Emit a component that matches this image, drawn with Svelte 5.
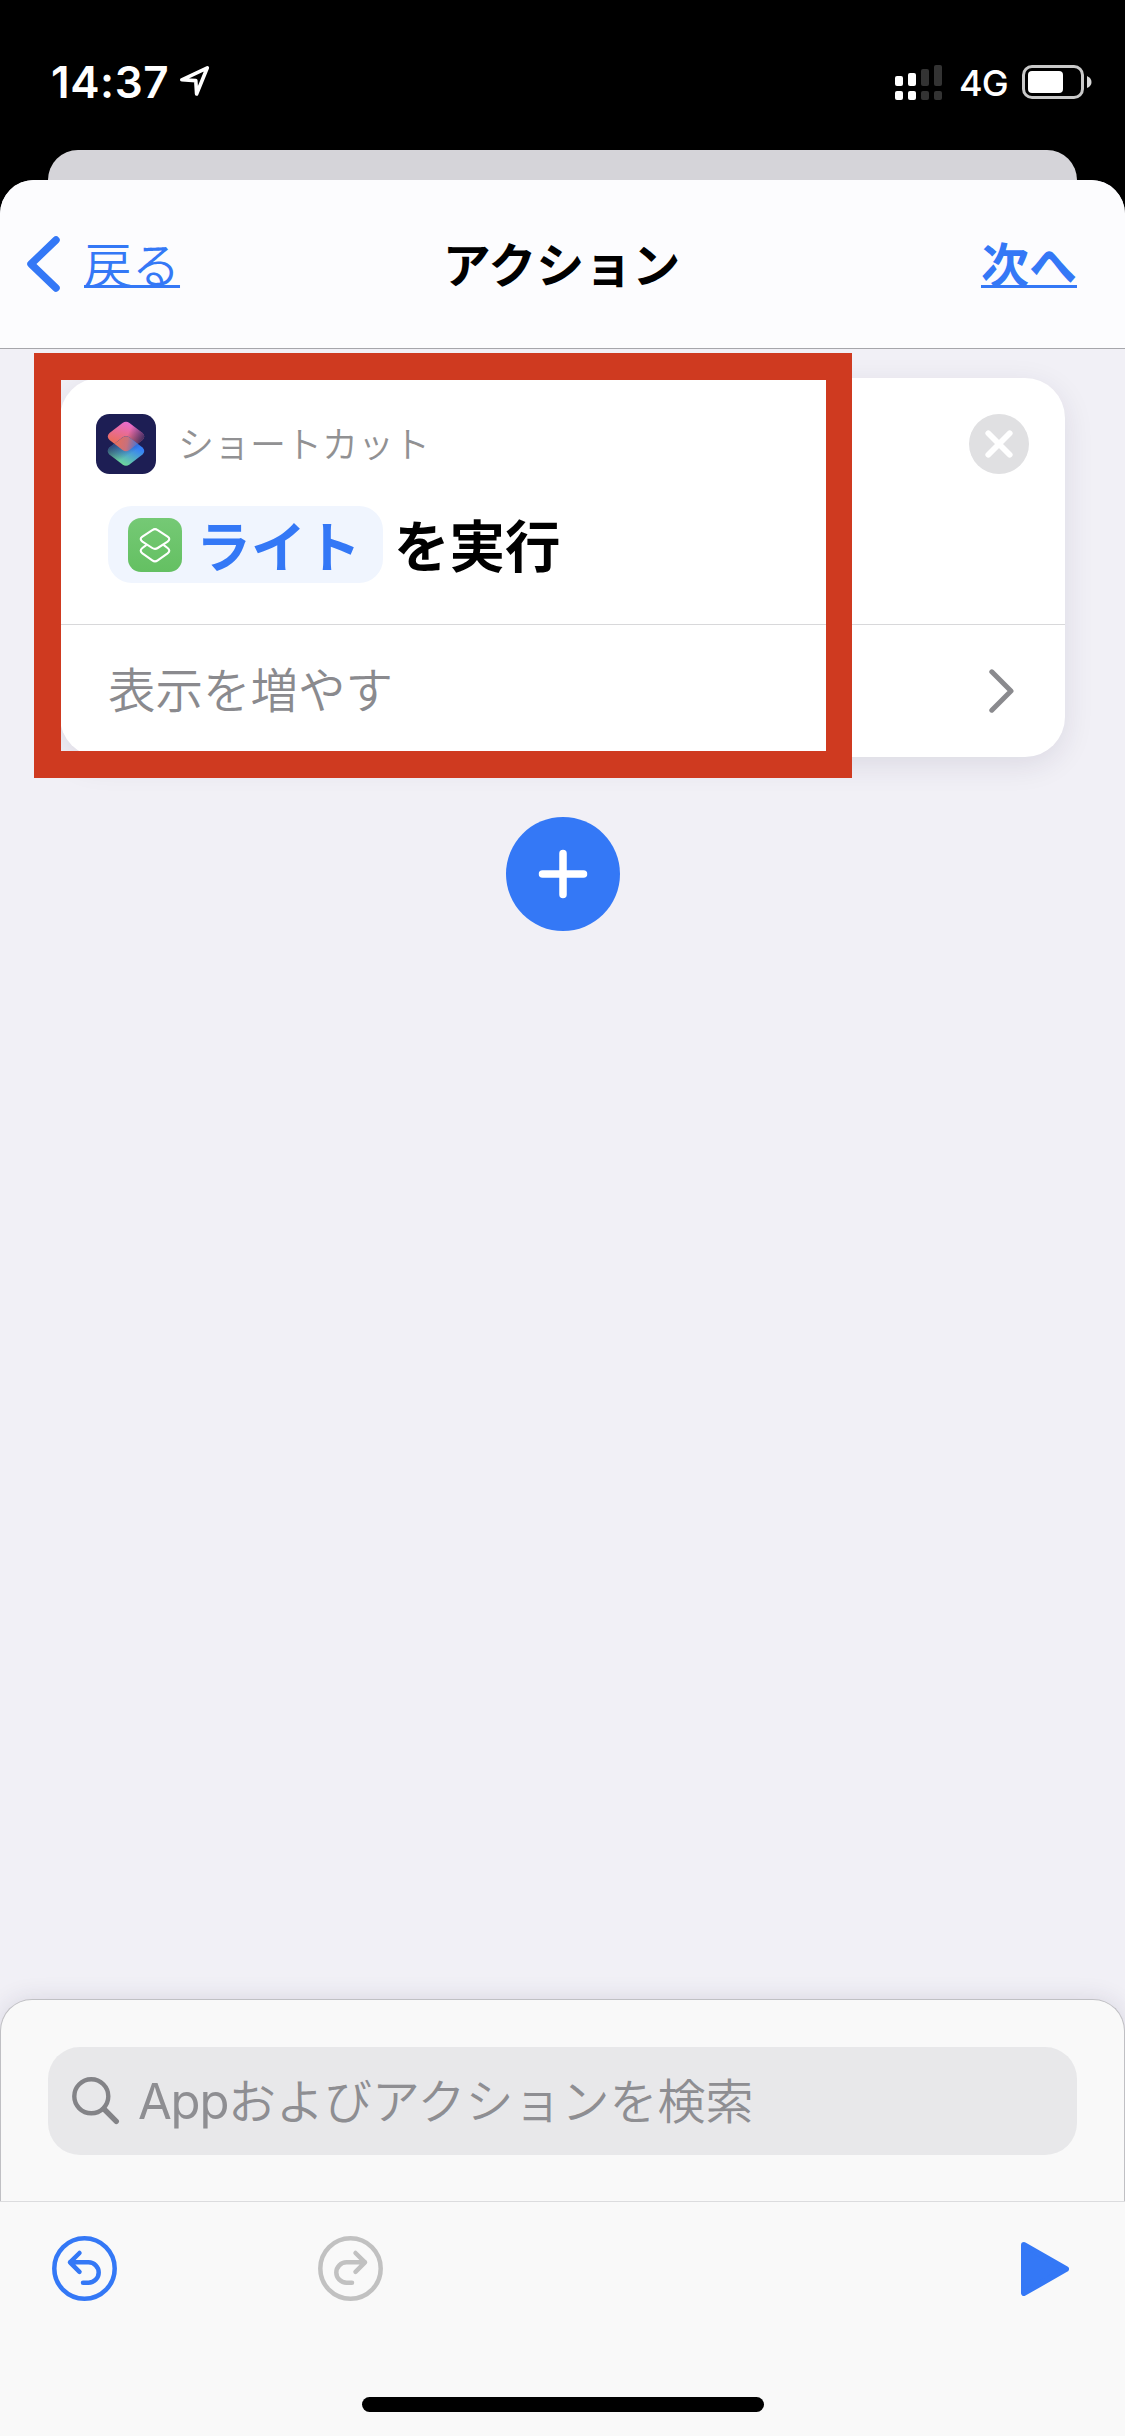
<script>
  const signal = [
    { height: 10, on: true },
    { height: 13, on: true },
    { height: 17, on: false },
    { height: 21, on: false }
  ];

  const diamond = "M26.5 9 Q30 6.4 33.5 9 L46.5 19 Q50 22.5 46.5 26 L33.5 36 Q30 38.6 26.5 36 L13.5 26 Q10 22.5 13.5 19 Z";
</script>

<div class="screen">
  <div class="status">
    <span class="time">14:37</span>
    <svg class="location" width="32" height="32" viewBox="0 0 32 32">
      <path d="M2.8 14.8 L28.3 2.8 L17.6 29 L16.8 15.6 Z" />
    </svg>
    <div class="signal">
      {#each signal as bar}
        <div class="bar" class:on={bar.on}>
          <i style="height: {bar.height}px"></i>
          <i class="dot"></i>
        </div>
      {/each}
    </div>
    <span class="network">4G</span>
    <svg class="battery" width="70" height="34" viewBox="0 0 70 34">
      <rect x="1.5" y="1.5" width="59" height="31" rx="8.5" fill="none" stroke="#c9c9c9" stroke-width="3" />
      <rect x="6" y="6" width="35" height="22" rx="4" fill="#fff" />
      <path d="M65 11 Q69.5 13 69.5 17 Q69.5 21 65 23 Z" fill="#d8d8d8" />
    </svg>
  </div>

  <div class="back-sheet"></div>

  <main class="sheet">
    <header>
      <a class="back" href="#back">
        <svg width="34" height="58" viewBox="0 0 34 58">
          <path d="M30 5 L5 29 L30 53" />
        </svg>
        <span>戻る</span>
      </a>
      <h1>アクション</h1>
      <a class="next" href="#next">次へ</a>
    </header>

    <section class="canvas">
      <div class="card">
        <div class="card-top">
          <div class="app-row">
            <svg width="60" height="60" viewBox="0 0 60 60">
              <defs>
                <linearGradient id="warm" x1="0.6" y1="0" x2="0.3" y2="0.8">
                  <stop offset="0" stop-color="#e76bd3" />
                  <stop offset="1" stop-color="#ea6d53" />
                </linearGradient>
                <linearGradient id="warmShade" x1="0.5" y1="0.4" x2="1" y2="0.6">
                  <stop offset="0.1" stop-color="#1d1e54" stop-opacity="0" />
                  <stop offset="1" stop-color="#1d1e54" stop-opacity="0.85" />
                </linearGradient>
                <linearGradient id="cool" x1="0.8" y1="0.3" x2="0.4" y2="1">
                  <stop offset="0.1" stop-color="#3580f7" />
                  <stop offset="1" stop-color="#72dc94" />
                </linearGradient>
                <linearGradient id="coolShade" x1="0.1" y1="0.2" x2="0.5" y2="0.7">
                  <stop offset="0" stop-color="#1d1e54" stop-opacity="0.8" />
                  <stop offset="1" stop-color="#1d1e54" stop-opacity="0" />
                </linearGradient>
                <linearGradient id="overlap" x1="0.2" y1="0.2" x2="0.85" y2="0.3">
                  <stop offset="0" stop-color="#e86e5a" />
                  <stop offset="0.5" stop-color="#c8707c" />
                  <stop offset="1" stop-color="#3f74d8" />
                </linearGradient>
                <clipPath id="upper"><path d={diamond} /></clipPath>
              </defs>
              <rect width="60" height="60" rx="13.5" fill="#1d1e54" />
              <path d={diamond} fill="url(#warm)" />
              <path d={diamond} fill="url(#warmShade)" />
              <g transform="translate(0 14.5)">
                <path d={diamond} fill="url(#cool)" />
                <path d={diamond} fill="url(#coolShade)" />
              </g>
              <g clip-path="url(#upper)">
                <path d={diamond} transform="translate(0 14.5)" fill="url(#overlap)" />
              </g>
            </svg>
            <span class="app-name">ショートカット</span>
            <svg class="remove" width="60" height="60" viewBox="0 0 60 60">
              <circle cx="30" cy="30" r="30" fill="#e0e0e2" />
              <path d="M19.3 19.3 L40.7 40.7 M40.7 19.3 L19.3 40.7" stroke="#fff" stroke-width="5.8" stroke-linecap="round" />
            </svg>
          </div>
          <div class="action">
            <span class="token">
              <svg width="54" height="54" viewBox="0 0 54 54">
                <defs>
                  <linearGradient id="green" x1="0" y1="0" x2="0" y2="1">
                    <stop offset="0" stop-color="#75c975" />
                    <stop offset="1" stop-color="#64c062" />
                  </linearGradient>
                </defs>
                <rect width="54" height="54" rx="13" fill="url(#green)" />
                <g fill="none" stroke="#fff" stroke-width="2.1" stroke-linejoin="round">
                  <path d="M24.3 12.2 Q27 10 29.7 12.2 L39.6 18.6 Q43 21 39.6 23.6 L29.7 30 Q27 31.8 24.3 30 L14.4 23.6 Q11 21 14.4 18.6 Z" />
                  <path d="M18.5 26.8 L14.4 30 Q11 32.8 14.4 35.4 L24.3 42.4 Q27 44.4 29.7 42.4 L39.6 35.4 Q43 32.8 39.6 30 L35.5 26.8" />
                </g>
              </svg>
              <span class="label">ライト</span>
            </span>
            <span class="run">を実行</span>
          </div>
        </div>
        <div class="more">
          <span>表示を増やす</span>
          <svg width="26" height="44" viewBox="0 0 26 44">
            <path d="M2.8 2.8 L22 22 L2.8 41.2" />
          </svg>
        </div>
      </div>

      <button class="add" aria-label="追加">
        <svg width="50" height="50" viewBox="0 0 50 50">
          <path d="M25 4.5 V45.5 M4.5 25 H45.5" />
        </svg>
      </button>
    </section>

    <section class="drawer">
      <div class="search">
        <svg width="48" height="48" viewBox="0 0 48 48">
          <circle cx="19.3" cy="19.3" r="17" />
          <path d="M32 32 L44.3 44.3" stroke-width="5.4" />
        </svg>
        <span><b>App</b>およびアクションを検索</span>
      </div>
    </section>

    <footer>
      <div class="tools">
        <svg class="undo" width="65" height="65" viewBox="0 0 65 65">
          <circle cx="32.5" cy="32.5" r="30.2" />
          <path d="M27.5 17 L18 26.3 L27.5 35.8 M18 26.3 H36.5 A10.2 10.2 0 0 1 36.5 46.7 H31" />
        </svg>
        <svg class="redo" width="65" height="65" viewBox="0 0 65 65">
          <circle cx="32.5" cy="32.5" r="30.2" />
          <path d="M37.5 17 L47 26.3 L37.5 35.8 M47 26.3 H28.5 A10.2 10.2 0 0 0 28.5 46.7 H34" />
        </svg>
        <svg class="play" width="48" height="54" viewBox="0 0 48 54">
          <path d="M3 3 L45 27 L3 51 Z" />
        </svg>
      </div>
      <div class="home"></div>
    </footer>
  </main>

  <div class="highlight"></div>
</div>

<style>
  :global(body) {
    margin: 0;
    background: #000;
  }

  .screen {
    position: relative;
    width: 1125px;
    height: 2436px;
    overflow: hidden;
    display: flex;
    flex-direction: column;
    background: #000;
    font-family: Inter, "Noto Sans CJK JP", sans-serif;
  }

  svg {
    display: block;
    flex: none;
  }

  .status {
    height: 150px;
    box-sizing: border-box;
    padding: 65px 33px 0 51px;
    display: flex;
    align-items: flex-start;
    color: #fff;
  }

  .time {
    width: 128px;
    font-size: 44px;
    line-height: 34px;
    font-weight: 600;
    letter-spacing: 0.6px;
  }

  .location {
    fill: none;
    stroke: #fff;
    stroke-width: 3.6;
    stroke-linejoin: round;
  }

  .signal {
    display: flex;
    gap: 5px;
    height: 35px;
    margin-left: auto;
  }

  .bar {
    display: flex;
    flex-direction: column;
    justify-content: flex-end;
    gap: 5px;
  }

  .bar i {
    width: 8px;
    background: #333;
    border-radius: 2px;
  }

  .bar .dot {
    height: 9px;
  }

  .bar.on i {
    background: #fff;
  }

  .network {
    width: 63px;
    margin-left: 17px;
    font-size: 36px;
    line-height: 37px;
    font-weight: 450;
    letter-spacing: -1px;
  }

  .back-sheet {
    height: 30px;
    margin: 0 48px;
    background: #d5d4d9;
    border-radius: 30px 30px 0 0;
  }

  .sheet {
    flex: 1;
    display: flex;
    flex-direction: column;
    background: #f1f0f6;
    border-radius: 34px 34px 0 0;
    overflow: hidden;
  }

  header {
    height: 168px;
    display: grid;
    grid-template-columns: 1fr auto 1fr;
    align-items: center;
    padding: 0 48px 0 26px;
    background: #fcfcfe;
    border-bottom: 1px solid #a6a6ab;
    font-size: 48px;
    line-height: 70px;
  }

  header a {
    color: #3478f6;
    text-decoration: none;
  }

  .back {
    display: flex;
    align-items: center;
    gap: 24px;
  }

  .back svg {
    fill: none;
    stroke: #3478f6;
    stroke-width: 7.5;
    stroke-linecap: round;
    stroke-linejoin: round;
  }

  .back span,
  .next {
    padding-top: 3px;
    text-decoration: underline;
    text-decoration-thickness: 3px;
    text-underline-offset: 2px;
    text-decoration-skip-ink: none;
  }

  .back span {
    font-weight: 350;
  }

  h1 {
    margin: 0 0 0 20px;
    padding-top: 3px;
    font-size: 48px;
    font-weight: 700;
  }

  .next {
    justify-self: end;
    font-weight: 600;
  }

  .canvas {
    flex: 1;
    display: flex;
    flex-direction: column;
    align-items: center;
    padding: 29px 60px 0;
  }

  .card {
    width: 1005px;
    height: 379px;
    background: #fff;
    border-radius: 40px;
    box-shadow: 0 8px 30px rgba(40, 30, 70, 0.1);
  }

  .card-top {
    height: 247px;
    box-sizing: border-box;
    padding: 36px 36px 0;
    border-bottom: 1px solid #d8d8da;
  }

  .app-row {
    height: 60px;
    display: flex;
    align-items: center;
  }

  .app-name {
    margin-left: 22px;
    padding-top: 3px;
    font-size: 36px;
    line-height: 57px;
    font-weight: 350;
    color: #919193;
  }

  .remove {
    margin-left: auto;
  }

  .action {
    height: 77px;
    display: flex;
    align-items: center;
    margin: 32px 0 0 12px;
    font-size: 55.5px;
    line-height: 71px;
    font-weight: 700;
  }

  .token {
    width: 275px;
    height: 77px;
    box-sizing: border-box;
    padding-left: 20px;
    display: flex;
    align-items: center;
    gap: 14px;
    white-space: nowrap;
    background: #f0f5fe;
    border-radius: 24px;
    color: #3478f6;
  }

  .label {
    padding-top: 5px;
    font-size: 55px;
  }

  .run {
    margin-left: 11px;
    padding-top: 4px;
  }

  .more {
    height: 132px;
    display: flex;
    align-items: center;
    justify-content: space-between;
    padding: 0 50px 0 48px;
    font-size: 47.5px;
    line-height: 70px;
    font-weight: 350;
    color: #8a8a8e;
  }

  .more svg {
    fill: none;
    stroke: #8a8a8e;
    stroke-width: 5;
    stroke-linecap: round;
    stroke-linejoin: round;
  }

  .add {
    width: 114px;
    height: 114px;
    margin: 60px 0 0 1px;
    padding: 0;
    display: flex;
    align-items: center;
    justify-content: center;
    border: 0;
    border-radius: 50%;
    background: #3478f6;
  }

  .add path {
    stroke: #fff;
    stroke-width: 7.5;
    stroke-linecap: round;
  }

  .drawer {
    height: 202px;
    box-sizing: border-box;
    padding: 47px 47px 0;
    background: #f9f9f9;
    border: 1px solid #c0c0c4;
    border-bottom: 0;
    border-radius: 32px 32px 0 0;
    box-shadow: 0 0 24px rgba(40, 30, 70, 0.12);
  }

  .search {
    height: 108px;
    box-sizing: border-box;
    padding-left: 24px;
    display: flex;
    align-items: center;
    gap: 18px;
    background: #e8e8ea;
    border-radius: 32px;
    font-size: 48px;
    line-height: 70px;
    font-weight: 350;
    color: #8e8e92;
  }

  .search span {
    padding-top: 2px;
  }

  .search b {
    display: inline-block;
    width: 90px;
    font-size: 49px;
    font-weight: 400;
    letter-spacing: -1.2px;
  }

  .search svg {
    fill: none;
    stroke: #838387;
    stroke-width: 4.4;
    stroke-linecap: round;
  }

  footer {
    height: 234px;
    display: flex;
    flex-direction: column;
    align-items: center;
    background: #f9f9f9;
    border-top: 1px solid #dcdcde;
    z-index: 1;
  }

  .tools {
    width: 1125px;
    box-sizing: border-box;
    padding: 34px 56px 0 52px;
    display: flex;
    align-items: center;
  }

  .undo,
  .redo {
    fill: none;
    stroke: #3478f6;
    stroke-width: 4.5;
    stroke-linecap: round;
    stroke-linejoin: round;
  }

  .redo {
    margin-left: 201px;
    stroke: #c1c1c1;
  }

  .play {
    margin-left: auto;
    fill: #3478f6;
    stroke: #3478f6;
    stroke-width: 6;
    stroke-linejoin: round;
  }

  .home {
    width: 402px;
    height: 15px;
    margin-top: 96px;
    border-radius: 8px;
    background: #000;
  }

  /* marker drawn over the card */
  .highlight {
    position: absolute;
    left: 34px;
    top: 353px;
    width: 818px;
    height: 425px;
    box-sizing: border-box;
    border: 27px solid #cf3a20;
    border-right-width: 26px;
  }
</style>
